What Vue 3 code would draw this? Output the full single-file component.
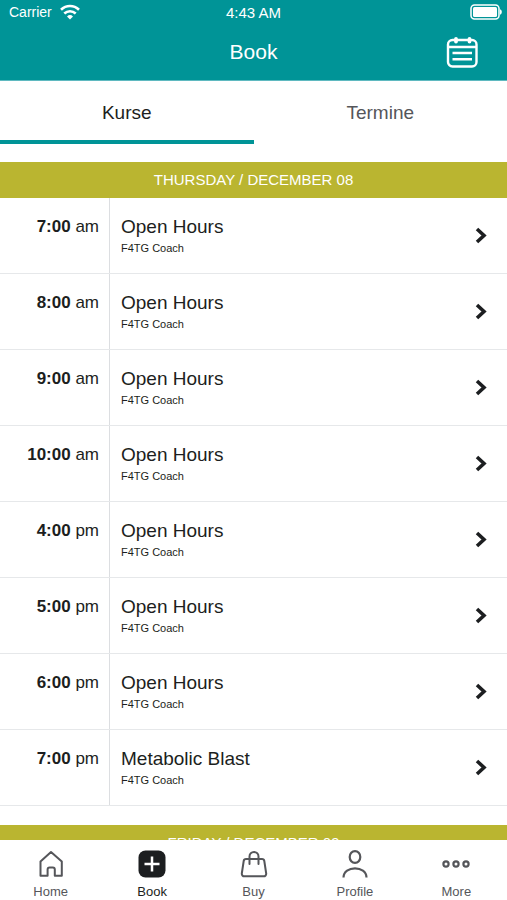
<script setup>
import { ref } from 'vue'

const activeTab = ref('Kurse')
const tabs = ['Kurse', 'Termine']

const days = [
  {
    label: 'Thursday / December 08',
    classes: [
      { time: '7:00', period: 'am', name: 'Open Hours', coach: 'F4TG Coach' },
      { time: '8:00', period: 'am', name: 'Open Hours', coach: 'F4TG Coach' },
      { time: '9:00', period: 'am', name: 'Open Hours', coach: 'F4TG Coach' },
      { time: '10:00', period: 'am', name: 'Open Hours', coach: 'F4TG Coach' },
      { time: '4:00', period: 'pm', name: 'Open Hours', coach: 'F4TG Coach' },
      { time: '5:00', period: 'pm', name: 'Open Hours', coach: 'F4TG Coach' },
      { time: '6:00', period: 'pm', name: 'Open Hours', coach: 'F4TG Coach' },
      { time: '7:00', period: 'pm', name: 'Metabolic Blast', coach: 'F4TG Coach' },
    ],
  },
  { label: 'Friday / December 09', classes: [] },
]
</script>

<template>
  <div class="app">
    <header class="top">
      <div class="status">
        <div class="carrier">
          <span>Carrier</span>
          <svg width="20" height="16" viewBox="0 0 20 16" fill="none" stroke="currentColor" stroke-width="2.6">
            <path d="M1 5.800C6.200.800 13.800.800 19 5.800" />
            <path d="M4.300 9.500c3.300-3.100 8.100-3.100 11.400 0" />
            <path d="M10 15.500 7 12.500a4.300 4.300 0 0 1 6 0z" fill="currentColor" stroke="none" />
          </svg>
        </div>
        <span class="clock">4:43 AM</span>
        <div class="battery">
          <svg width="32" height="16" viewBox="0 0 32 16" fill="none">
            <rect x="1" y="1" width="28" height="14" rx="3.500" stroke="currentColor" stroke-width="1.500" />
            <rect x="3" y="3" width="24" height="10" rx="1.500" fill="currentColor" />
            <path d="M30 5.300c2.400.7 2.400 4.700 0 5.400z" fill="currentColor" />
          </svg>
        </div>
      </div>
      <div class="title-bar">
        <h1>Book</h1>
        <button class="calendar" type="button" aria-label="Calendar">
          <svg width="32" height="32" viewBox="0 0 32 32" fill="none" stroke="currentColor" stroke-width="2.400" stroke-linecap="round">
            <rect x="2" y="4" width="28.500" height="26.500" rx="4.500" />
            <path d="M2.500 11h27.500" />
            <path d="M6.500 17h19.500M6.500 23.300h19.500" stroke-linecap="butt" />
            <path d="M10 3v2.500M23.500 3v2.500" stroke-width="3.800" />
          </svg>
        </button>
      </div>
    </header>

    <div class="tabs" role="tablist">
      <button
        v-for="tab in tabs"
        :key="tab"
        type="button"
        role="tab"
        class="tab"
        :class="{ active: tab === activeTab }"
        :aria-selected="tab === activeTab"
        @click="activeTab = tab"
      >{{ tab }}</button>
    </div>

    <main class="schedule">
      <section v-for="day in days" :key="day.label" class="day">
        <h2>{{ day.label }}</h2>
        <ul>
          <li v-for="item in day.classes" :key="item.time + item.period">
            <a href="#" class="row">
              <span class="time"><b>{{ item.time }}</b> {{ item.period }}</span>
              <span class="info">
                <span class="name">{{ item.name }}</span>
                <span class="coach">{{ item.coach }}</span>
              </span>
              <svg class="chevron" width="12" height="18" viewBox="0 0 12 18" fill="none" stroke="currentColor" stroke-width="3.600">
                <path d="M2 2 9 8.500l-7 6.500" />
              </svg>
            </a>
          </li>
        </ul>
      </section>
    </main>

    <nav class="bottom">
      <a href="#">
        <svg width="28" height="28" viewBox="0 0 28 28" fill="none" stroke="currentColor" stroke-width="2" stroke-linejoin="round">
          <path d="M3.500 11.500 14 2l10.800 9.500V25.700h-7v-6.200a2 2 0 0 0-2-2h-3.200a2 2 0 0 0-2 2v6.200H3.500z" />
        </svg>
        <span>Home</span>
      </a>
      <a href="#" class="active" aria-current="page">
        <svg width="28" height="28" viewBox="0 0 28 28">
          <rect x=".5" y=".5" width="27" height="27" rx="7" fill="currentColor" />
          <path d="M14 6.500v15M6.500 14h15" stroke="#fff" stroke-width="2.500" />
        </svg>
        <span>Book</span>
      </a>
      <a href="#">
        <svg width="28" height="28" viewBox="0 0 28 28" fill="none" stroke="currentColor" stroke-width="2" stroke-linecap="round" stroke-linejoin="round">
          <path d="M6 9h16q2 0 2.300 2l1.900 12.500a2.500 2.500 0 0 1-2.500 2.800H4.300a2.500 2.500 0 0 1-2.500-2.800L3.700 11Q4 9 6 9z" />
          <path d="M9.500 14V6.500a4.500 4.500 0 0 1 9 0V14" />
        </svg>
        <span>Buy</span>
      </a>
      <a href="#">
        <svg width="28" height="28" viewBox="0 0 28 28" fill="none" stroke="currentColor" stroke-width="2.200">
          <ellipse cx="14" cy="7" rx="5.300" ry="5.900" />
          <path d="M2.500 27.500C2.500 15.200 25.500 15.200 25.500 27.500" />
        </svg>
        <span>Profile</span>
      </a>
      <a href="#">
        <svg width="28" height="28" viewBox="0 0 28 28" fill="none" stroke="currentColor" stroke-width="2.200">
          <circle cx="4" cy="14" r="2.600" />
          <circle cx="14" cy="14" r="2.600" />
          <circle cx="24" cy="14" r="2.600" />
        </svg>
        <span>More</span>
      </a>
    </nav>
  </div>
</template>

<style>
body {
  margin: 0;
  background: #fff;
}
</style>

<style scoped>
.app {
  display: flex;
  flex-direction: column;
  height: 100vh;
  overflow: hidden;
  color: #1c1e20;
  font-family: "Liberation Sans", Arial, sans-serif;
}

button {
  margin: 0;
  padding: 0;
  border: 0;
  background: none;
  color: inherit;
  font: inherit;
  cursor: pointer;
}

a {
  color: inherit;
  text-decoration: none;
}

svg {
  display: block;
  flex: none;
}

.top {
  flex: none;
  background: #009497;
  border-bottom: 1px solid #5fb9c0;
  color: #fff;
}

.status {
  display: grid;
  grid-template-columns: 1fr auto 1fr;
  align-items: center;
  height: 24px;
  padding: 0 5px;
  font-size: 15px;
}

.carrier {
  display: flex;
  align-items: center;
  gap: 8px;
  padding-left: 4px;
  font-size: 14px;
}

.battery {
  display: flex;
  justify-content: flex-end;
}

.title-bar {
  display: grid;
  grid-template-columns: 1fr auto 1fr;
  align-items: center;
  height: 56px;
  padding: 0 29px;
}

h1 {
  grid-column: 2;
  margin: 0;
  font-size: 21px;
  font-weight: 400;
}

.calendar {
  justify-self: end;
}

.tabs {
  display: flex;
  flex: none;
  height: 63px;
  margin-bottom: 18px;
}

.tab {
  flex: 1;
  padding-top: 4px;
  border-bottom: 4px solid transparent;
  color: #55565a;
  font-size: 19px;
}

.tab.active {
  border-bottom-color: #009497;
  color: #1c1e20;
}

.schedule {
  flex: 1;
  min-height: 0;
  overflow: hidden;
}

.day {
  margin-bottom: 19px;
}

h2 {
  margin: 0;
  background: #bab530;
  color: #fff;
  font-size: 15px;
  font-weight: 400;
  line-height: 36px;
  text-align: center;
  text-transform: uppercase;
}

ul {
  margin: 0;
  padding: 0;
  list-style: none;
}

.row {
  display: flex;
  box-sizing: border-box;
  height: 76px;
  border-bottom: 1px solid #e6e8ea;
}

.time {
  box-sizing: border-box;
  width: 110px;
  padding: 17px 10px 0 0;
  border-right: 1px solid #dcdee1;
  font-size: 17px;
  line-height: 24px;
  text-align: right;
}

.info {
  display: flex;
  flex: 1;
  flex-direction: column;
  padding: 17px 0 0 11px;
}

.name {
  font-size: 19px;
  line-height: 24px;
}

.coach {
  font-size: 11px;
  line-height: 18px;
}

.chevron {
  align-self: center;
  margin-right: 20px;
}

.bottom {
  display: flex;
  flex: none;
  height: 60px;
  background: #fff;
  color: #55565a;
}

.bottom a {
  display: flex;
  flex: 1;
  flex-direction: column;
  align-items: center;
  gap: 6px;
  padding-top: 10px;
  font-size: 13px;
  line-height: 16px;
}

.bottom .active {
  color: #1c1e20;
}
</style>
